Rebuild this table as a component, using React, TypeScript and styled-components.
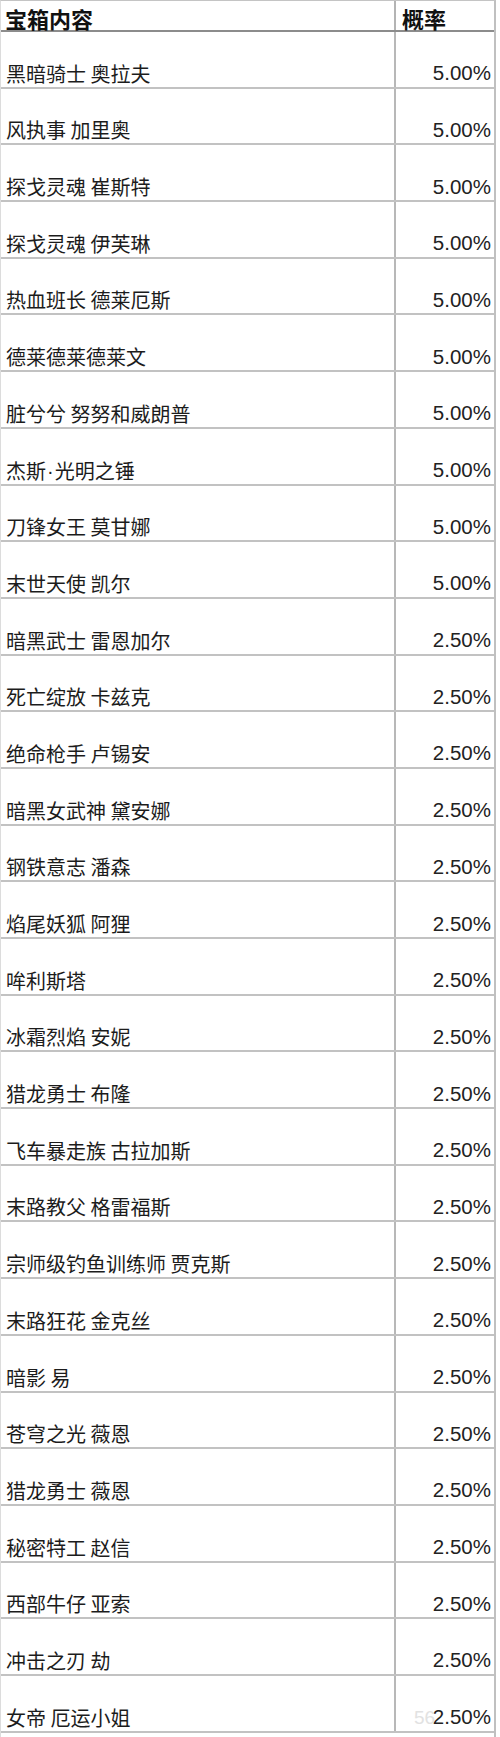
import React from "react";
import styled, { createGlobalStyle } from "styled-components";

const GlobalStyle = createGlobalStyle`
  html, body {
    margin: 0;
    padding: 0;
    background: #ffffff;
  }
  body {
    font-family: "Liberation Sans", "Noto Sans CJK SC", sans-serif;
    color: #1a1a1a;
  }
`;

const rows: [string, string][] = [
  ["黑暗骑士 奥拉夫", "5.00%"],
  ["风执事 加里奥", "5.00%"],
  ["探戈灵魂 崔斯特", "5.00%"],
  ["探戈灵魂 伊芙琳", "5.00%"],
  ["热血班长 德莱厄斯", "5.00%"],
  ["德莱德莱德莱文", "5.00%"],
  ["脏兮兮 努努和威朗普", "5.00%"],
  ["杰斯·光明之锤", "5.00%"],
  ["刀锋女王 莫甘娜", "5.00%"],
  ["末世天使 凯尔", "5.00%"],
  ["暗黑武士 雷恩加尔", "2.50%"],
  ["死亡绽放 卡兹克", "2.50%"],
  ["绝命枪手 卢锡安", "2.50%"],
  ["暗黑女武神 黛安娜", "2.50%"],
  ["钢铁意志 潘森", "2.50%"],
  ["焰尾妖狐 阿狸", "2.50%"],
  ["哞利斯塔", "2.50%"],
  ["冰霜烈焰 安妮", "2.50%"],
  ["猎龙勇士 布隆", "2.50%"],
  ["飞车暴走族 古拉加斯", "2.50%"],
  ["末路教父 格雷福斯", "2.50%"],
  ["宗师级钓鱼训练师 贾克斯", "2.50%"],
  ["末路狂花 金克丝", "2.50%"],
  ["暗影 易", "2.50%"],
  ["苍穹之光 薇恩", "2.50%"],
  ["猎龙勇士 薇恩", "2.50%"],
  ["秘密特工 赵信", "2.50%"],
  ["西部牛仔 亚索", "2.50%"],
  ["冲击之刃 劫", "2.50%"],
  ["女帝 厄运小姐", "2.50%"],
];

// the middle dot is narrow in the original, so give it a latin font
const renderName = (name: string) =>
  name.split("·").flatMap((part, i) =>
    i === 0 ? [part] : [<Dot key={i}>·</Dot>, part]
  );

export default function App() {
  return (
    <>
      <GlobalStyle />
      <Sheet>
        <HeaderRow>
          <HeadCell>宝箱内容</HeadCell>
          <HeadCell $right>概率</HeadCell>
        </HeaderRow>
        {rows.map(([name, rate], i) => (
          <Row key={i}>
            <NameCell>{renderName(name)}</NameCell>
            <RateCell>
              {i === rows.length - 1 && <Mark>56</Mark>}
              {rate}
            </RateCell>
          </Row>
        ))}
      </Sheet>
    </>
  );
}

const Sheet = styled.div`
  width: 496px;
  height: 1737px;
  box-sizing: border-box;
  border-top: 1px solid #c4c4c4;
  border-left: 1px solid #dcdcdc;
  border-right: 2px solid #c0c0c0;
  background: #fff;
  overflow: hidden;
`;

const HeaderRow = styled.div`
  display: grid;
  grid-template-columns: 395px 1fr;
  height: 31px;
  box-sizing: border-box;
  border-bottom: 2px solid #8c8c8c;
`;

const HeadCell = styled.div<{ $right?: boolean }>`
  display: flex;
  align-items: flex-end;
  padding: 0 0 1px ${(p) => (p.$right ? "6px" : "4px")};
  border-right: ${(p) => (p.$right ? "none" : "2px solid #b4b4b4")};
  font-family: "Noto Sans CJK SC", sans-serif;
  font-weight: 700;
  font-size: 22px;
  line-height: 1;
  color: #111;
`;

const Row = styled.div`
  display: grid;
  grid-template-columns: 395px 1fr;
  height: 56.7px;
  box-sizing: border-box;
  border-bottom: 2px solid #c2c2c2;
`;

const NameCell = styled.div`
  display: flex;
  align-items: flex-end;
  padding: 0 0 3px 5px;
  border-right: 2px solid #b8b8b8;
  font-family: "Noto Sans CJK SC", sans-serif;
  font-size: 20px;
  line-height: 1;
  color: #1c1c1c;
  white-space: pre;
`;

const Dot = styled.span`
  font-family: "Liberation Sans", Arial, sans-serif;
  padding: 0 1px;
`;

const RateCell = styled.div`
  position: relative;
  display: flex;
  align-items: flex-end;
  justify-content: flex-end;
  padding: 0 3px 3px 0;
  font-family: "Liberation Sans", Arial, sans-serif;
  font-size: 20.5px;
  line-height: 1;
  color: #222;
`;

const Mark = styled.span`
  position: absolute;
  left: 18px;
  bottom: 4px;
  font-size: 19px;
  color: #e2e2e2;
`;
